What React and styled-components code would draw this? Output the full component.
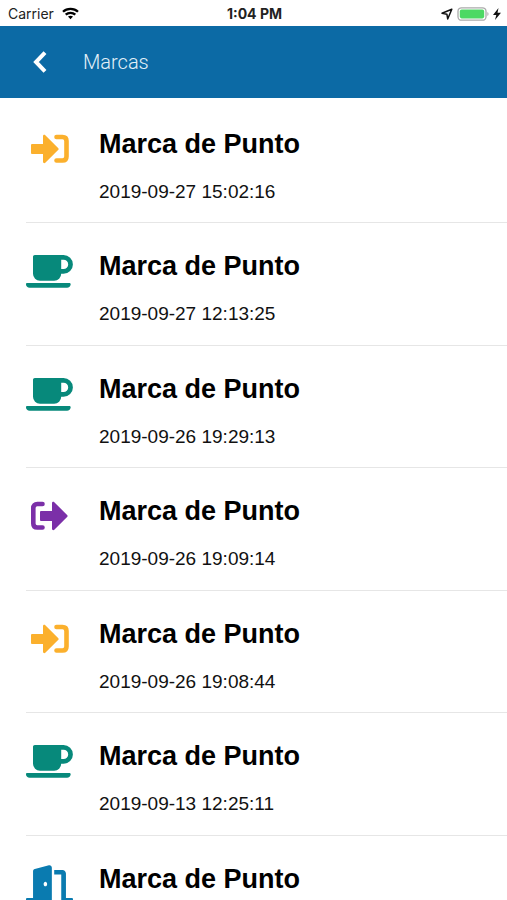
import React from "react";
import styled, { createGlobalStyle } from "styled-components";
import { FaDoorOpen } from "react-icons/fa";

const GlobalStyle = createGlobalStyle`
  * { box-sizing: border-box; }
  body { margin: 0; background: #fff; color: #000; font-family: "Liberation Sans", Arial, sans-serif; }
  html { scrollbar-width: none; }
`;

const Screen = styled.div`
  height: 100vh;
  display: flex;
  flex-direction: column;
  overflow: hidden;
`;

const StatusBar = styled.div`
  flex: none;
  display: grid;
  grid-template-columns: 1fr auto 1fr;
  align-items: center;
  height: 26px;
  padding: 1px 6px 0 8px;
  font: 400 14px/20px Inter, sans-serif;
  color: #222;
`;

const StatusGroup = styled.div`
  display: flex;
  align-items: center;
  justify-content: ${(p) => (p.$end ? "flex-end" : "flex-start")};
  gap: ${(p) => (p.$end ? "4px" : "8px")};
`;

const Clock = styled.time`
  font-size: 14px;
  font-weight: 700;
`;

const Toolbar = styled.header`
  flex: none;
  display: flex;
  align-items: center;
  gap: 28px;
  height: 72px;
  padding: 0 24px;
  background: #0c6aa5;
`;

const BackButton = styled.button`
  display: flex;
  align-items: center;
  justify-content: center;
  width: 31px;
  height: 44px;
  padding: 0;
  border: 0;
  background: none;
  color: #fff;
  cursor: pointer;
`;

const PageTitle = styled.h1`
  margin: 0;
  font: 300 20px/24px Roboto, sans-serif;
  color: #e3f0f8;
`;

const List = styled.ul`
  flex: 1;
  min-height: 0;
  margin: 0;
  padding: 3px 0 0 26px;
  overflow-y: auto;
  scrollbar-width: none;
  list-style: none;
`;

const Row = styled.li`
  display: flex;
  gap: 26px;
  padding-top: 27px;
  padding-bottom: 19px;
  border-bottom: 1px solid #e6e6e6;

  &:nth-child(odd) {
    padding-bottom: 18px;
  }
`;

const IconSlot = styled.div`
  flex: none;
  display: flex;
  align-items: center;
  justify-content: center;
  width: 47px;
  height: 38px;
  margin-top: 2px;
  color: ${(p) => p.$color};
`;

const RowTitle = styled.h2`
  margin: 0 0 20px;
  font-size: 27px;
  line-height: 32px;
`;

const Stamp = styled.time`
  display: block;
  font-size: 19px;
  line-height: 24px;
  color: #111;
`;

const DoorIcon = styled(FaDoorOpen)`
  width: 47px;
  height: 38px;
`;

const Wifi = () => (
  <svg width="17" height="13" viewBox="0 0 17 13" fill="none" stroke="#000" strokeWidth="2.3" aria-hidden="true">
    <path d="M1 4.8C5 .9 12 .9 16 4.8" />
    <path d="M3.7 7.7c2.7-2.5 6.9-2.5 9.6 0" />
    <path d="M6 9.6c1.5-1.3 3.5-1.3 5 0l-2.5 2.6z" fill="#000" stroke="none" />
  </svg>
);

const Location = () => (
  <svg width="12" height="12" viewBox="0 0 12 12" fill="none" stroke="#111" strokeWidth="1.5" strokeLinejoin="round" aria-hidden="true">
    <path d="M10.8 1.2 1 5.3l4.9.9.8 4.8z" />
  </svg>
);

const Battery = () => (
  <svg width="32" height="14" viewBox="0 0 32 14" aria-hidden="true">
    <rect x="1" y=".8" width="28" height="12.4" rx="3.5" fill="#fff" stroke="#aaa" strokeWidth="1.3" />
    <rect x="2.8" y="2.6" width="24.4" height="8.8" rx="1.8" fill="#4cd964" />
    <path d="M30.4 5c1.5.6 1.5 3.4 0 4z" fill="#aaa" />
  </svg>
);

const Bolt = () => (
  <svg width="8" height="12" viewBox="0 0 8 12" aria-hidden="true">
    <path d="M5.5 0 0 7h3.3L2 12l6-7.2H4.5z" fill="#111" />
  </svg>
);

const Chevron = () => (
  <svg width="14" height="22" viewBox="0 0 14 22" fill="none" stroke="currentColor" strokeWidth="4" aria-hidden="true">
    <path d="M12 1.6 3 11l9 9.4" />
  </svg>
);

const ARROW =
  "M1.3 10H12V2.2c0-1.2 1.4-1.8 2.3-.9l12.8 12.6c.7.7.7 1.5 0 2.2L14.3 28.7c-.9.9-2.3.3-2.3-.9V20H1.3C.5 20 0 19.5 0 18.7v-7.4C0 10.5.5 10 1.3 10Z";

const EnterIcon = () => (
  <svg width="39" height="30" viewBox="-1 0 39 30" aria-hidden="true">
    <path d={ARROW} fill="currentColor" />
    <path d="M25.5 3h6c2.500 0 4 1.500 4 4v15.500c0 2.500-1.500 4-4 4h-6" fill="none" stroke="currentColor" strokeWidth="4.6" strokeLinecap="round" />
  </svg>
);

const ExitIcon = () => (
  <svg width="39" height="30" viewBox="0 0 39 30" aria-hidden="true">
    <path d={ARROW} transform="translate(10 0)" fill="currentColor" />
    <path d="M12.5 3H7.3c-2.5 0-4 1.5-4 4v15.5c0 2.5 1.5 4 4 4h5.2" fill="none" stroke="currentColor" strokeWidth="4.6" strokeLinecap="round" />
  </svg>
);

const CupIcon = () => (
  <svg width="47" height="33" viewBox="0 0 47 33" fill="currentColor" aria-hidden="true">
    <path
      fillRule="evenodd"
      d="M8.8 0H37.5a9.4 9.4 0 0 1 0 18.8H35.2a7 7 0 0 1-7 7H14a7 7 0 0 1-7-7V1.8C7 .8 7.8 0 8.8 0ZM35.2 4.7v9.4h2.3a4.7 4.7 0 0 0 0-9.4Z"
    />
    <path d="M1.2 28H43.4c.7 0 1.2.5 1.2 1.2 0 2-1.6 3.6-3.6 3.6H3.6C1.6 32.8 0 31.2 0 29.2 0 28.5.5 28 1.2 28Z" />
  </svg>
);

const kinds = {
  enter: { Icon: EnterIcon, color: "#fbb02d" },
  pause: { Icon: CupIcon, color: "#07897b" },
  exit: { Icon: ExitIcon, color: "#7b2fa8" },
  door: { Icon: DoorIcon, color: "#0a7bb0" },
};

const marks = [
  { kind: "enter", at: "2019-09-27 15:02:16" },
  { kind: "pause", at: "2019-09-27 12:13:25" },
  { kind: "pause", at: "2019-09-26 19:29:13" },
  { kind: "exit", at: "2019-09-26 19:09:14" },
  { kind: "enter", at: "2019-09-26 19:08:44" },
  { kind: "pause", at: "2019-09-13 12:25:11" },
  { kind: "door" },
];

function Mark({ kind, at }) {
  const { Icon, color } = kinds[kind];
  return (
    <Row>
      <IconSlot $color={color}>
        <Icon />
      </IconSlot>
      <div>
        <RowTitle>Marca de Punto</RowTitle>
        {at && <Stamp dateTime={at}>{at}</Stamp>}
      </div>
    </Row>
  );
}

export default function App() {
  return (
    <Screen>
      <GlobalStyle />
      <StatusBar>
        <StatusGroup>
          Carrier
          <Wifi />
        </StatusGroup>
        <Clock>1:04 PM</Clock>
        <StatusGroup $end>
          <Location />
          <Battery />
          <Bolt />
        </StatusGroup>
      </StatusBar>
      <Toolbar>
        <BackButton type="button" aria-label="Volver">
          <Chevron />
        </BackButton>
        <PageTitle>Marcas</PageTitle>
      </Toolbar>
      <List>
        {marks.map((m, i) => (
          <Mark key={i} {...m} />
        ))}
      </List>
    </Screen>
  );
}
